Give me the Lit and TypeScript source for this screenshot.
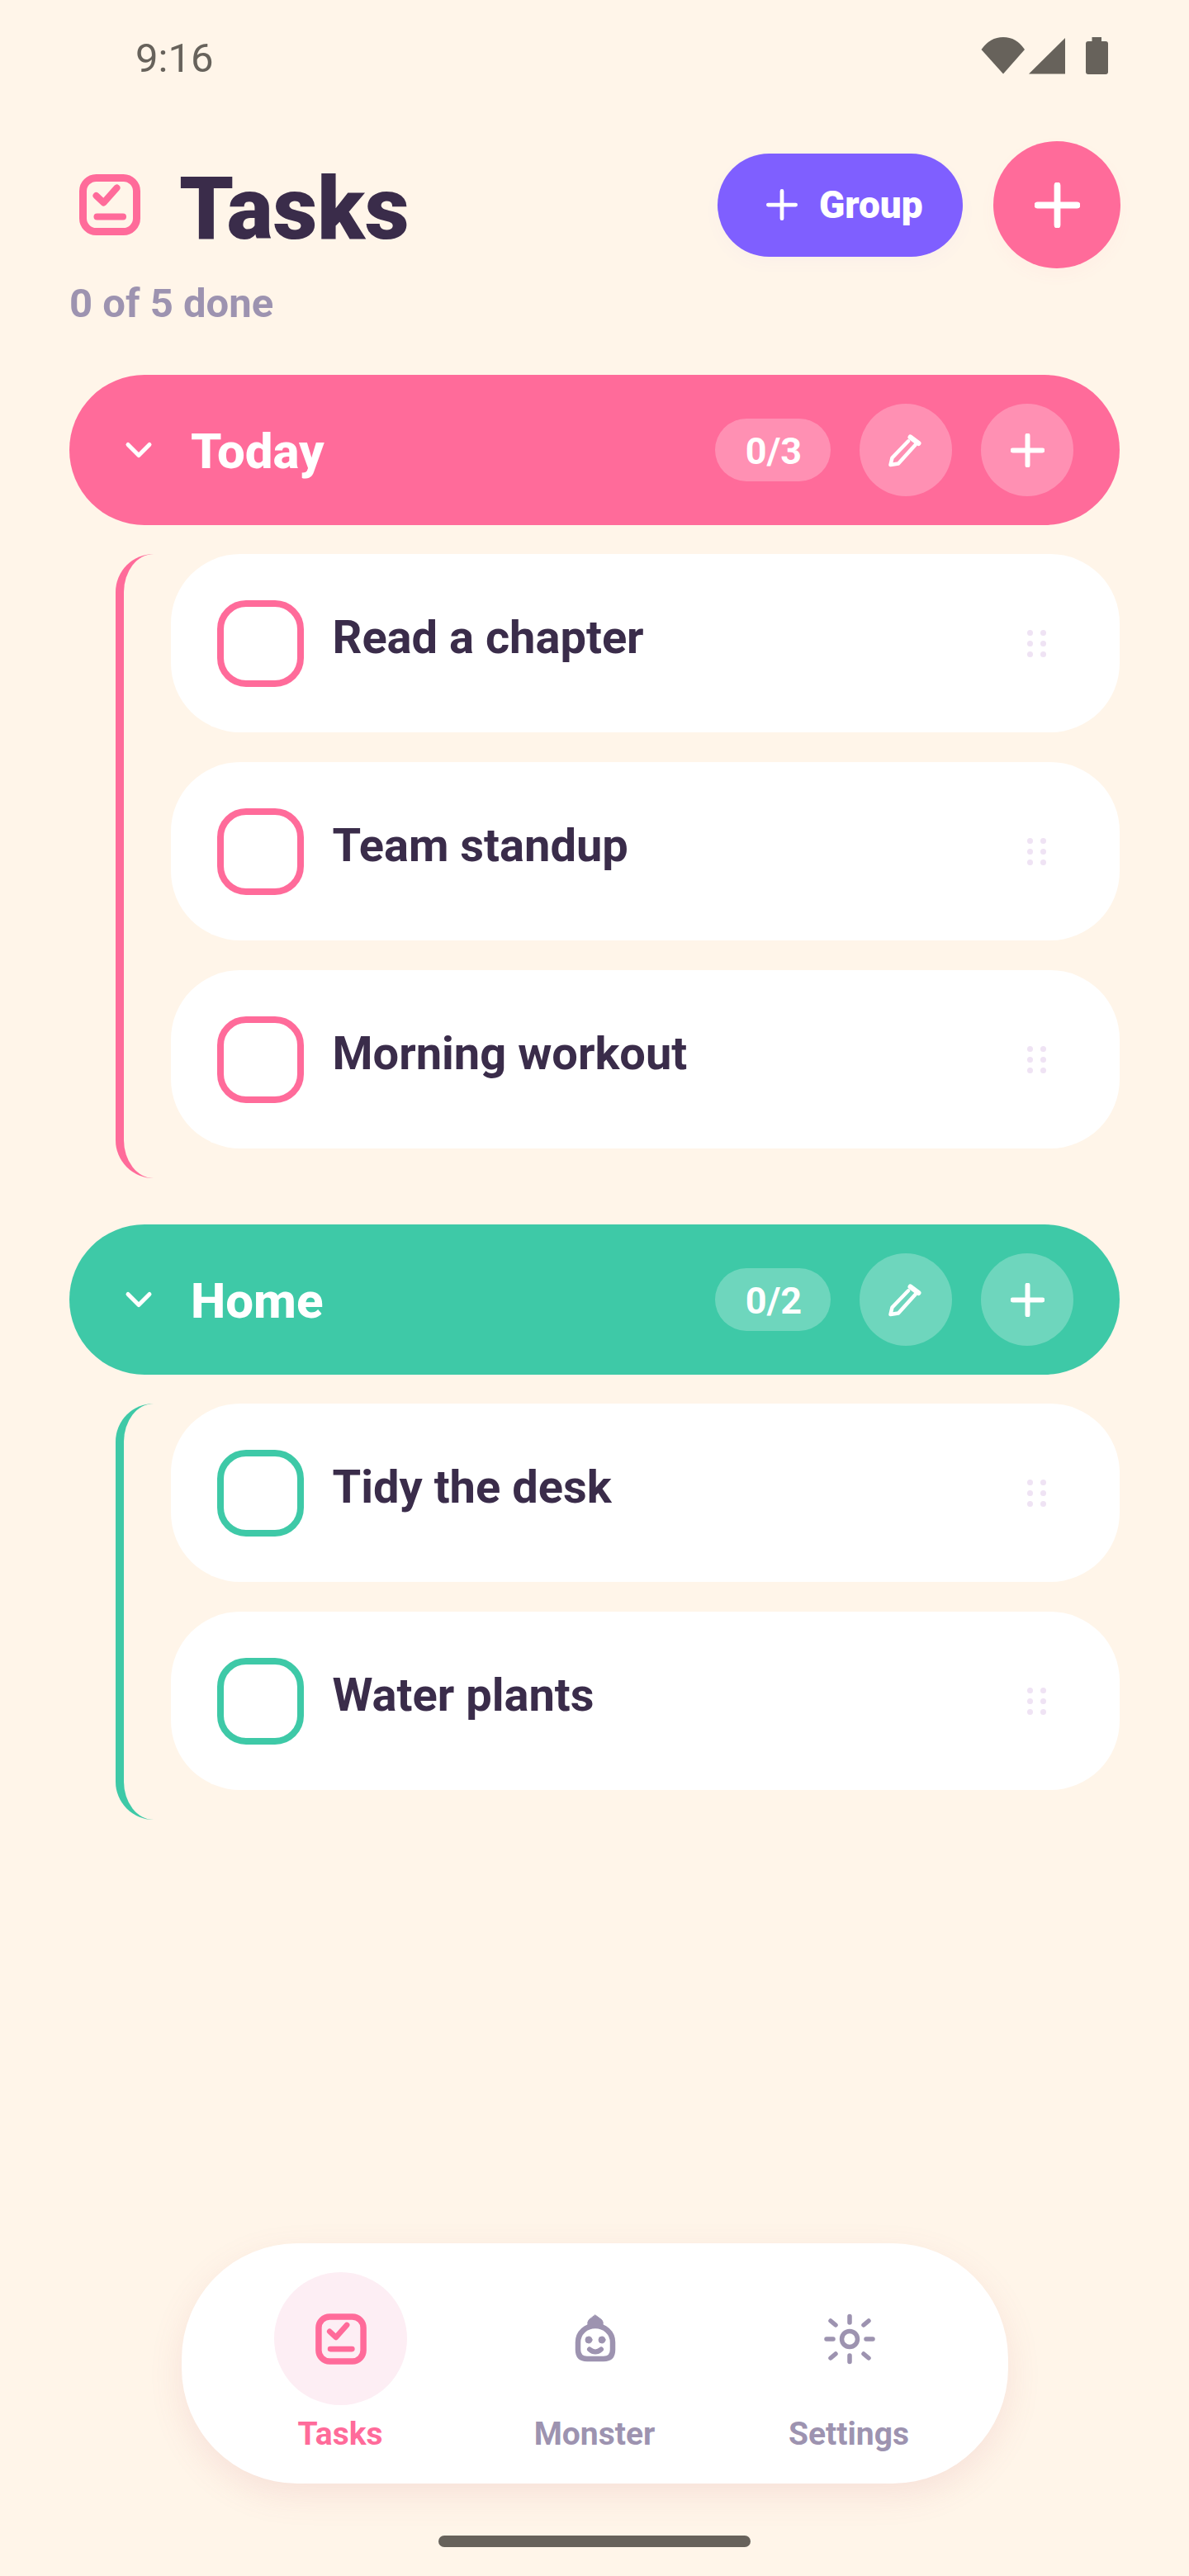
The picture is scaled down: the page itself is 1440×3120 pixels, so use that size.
import { LitElement, html, css, svg } from "lit";
import { customElement } from "lit/decorators.js";

const plus = (size: number, sw: number) => html`
  <svg width=${size} height=${size} viewBox="0 0 24 24" fill="none" stroke="#fff" stroke-width=${sw} stroke-linecap="round">
    <path d="M12 1.5v21M1.5 12h21" />
  </svg>
`;

const tasksIcon = (size: number, color: string) => html`
  <svg width=${size} height=${size} viewBox="0 0 84 84" fill="none" stroke=${color} stroke-linecap="round" stroke-linejoin="round">
    <rect x="9.500" y="9.500" width="65" height="65" rx="16" stroke-width="9" />
    <path d="M25.5 31l9 8.500 16-18" stroke-width="8" />
    <path d="M26.500 56.500h31.500" stroke-width="8" />
  </svg>
`;

const monsterIcon = html`
  <svg width="70" height="70" viewBox="0 0 70 70" fill="none" stroke="#9d93b0" stroke-linecap="round">
    <path d="M35 19C24 19 14 27 14 39v9q0 11 11 11h20q11 0 11-11v-9C56 27 46 19 35 19z" stroke-width="6.500" />
    <path d="M35 6l7.500 5.500q2.500 2.500 1.500 6.500H26q-1-4 1.500-6.500z" fill="#9d93b0" />
    <circle cx="27" cy="36" r="4" fill="#9d93b0" />
    <circle cx="43" cy="36" r="4" fill="#9d93b0" />
    <path d="M28 47.500q7 6 14 0" stroke-width="6" />
  </svg>
`;

const settingsIcon = html`
  <svg width="70" height="70" viewBox="0 0 70 70" fill="none" stroke="#9d93b0" stroke-linecap="round" stroke-width="5.500">
    <circle cx="35" cy="35" r="9.500" stroke-width="5.500" />
    <path d="M35 7.500V15M35 55v7.500M7 35h8M55 35h8M12 13l6 5M58 13l-6 5M12 58l6-5M58 58l-6-5" />
  </svg>
`;

const pencilIcon = html`
  <svg width="42" height="42" viewBox="0 0 42 42" fill="none" stroke="#fff" stroke-width="4.500" stroke-linecap="round" stroke-linejoin="round">
    <path d="M24 10.300L4.500 30.500 2.500 39l9.500-1.500L32.400 15" />
    <path d="M26.500 5.500l10 7.500" stroke-width="6" />
  </svg>
`;

const chevron = html`
  <svg class="chev" width="36" height="24" viewBox="0 0 36 24" fill="none" stroke="#fff" stroke-width="5" stroke-linecap="round" stroke-linejoin="round">
    <path d="M5 5.500l13 13 13-13" />
  </svg>
`;

const groups = [
  { name: "Today", color: "#ff6b9a", tasks: ["Read a chapter", "Team standup", "Morning workout"] },
  { name: "Home", color: "#3ec9a7", tasks: ["Tidy the desk", "Water plants"] },
];

const tabs = [
  { label: "Tasks", active: true },
  { label: "Monster", active: false },
  { label: "Settings", active: false },
];

@customElement("app-root")
export class AppRoot extends LitElement {
  static styles = css`
    :host {
      display: flex;
      flex-direction: column;
      width: 1440px;
      height: 3120px;
      background: #fff5e9;
      color: #3a2c4a;
      font-family: Roboto, "Noto Sans", sans-serif;
    }

    .status {
      display: flex;
      justify-content: space-between;
      align-items: flex-start;
      height: 171px;
      box-sizing: border-box;
      padding: 45px 98px 0 164px;
      flex: none;
    }

    .time {
      margin-top: 1px;
      font-size: 49px;
      line-height: 49px;
      color: #67625b;
    }

    .page {
      flex: 1;
      padding: 0 84px;
    }

    .top {
      display: flex;
      align-items: center;
      height: 154px;
    }

    .top-icon {
      display: flex;
      justify-content: center;
      width: 98px;
      margin-right: 35px;
    }

    .title {
      font-size: 105px;
      font-weight: 900;
      line-height: 154px;
      margin: 12px 0 0;
      flex: 1;
    }

    .btn-group {
      display: flex;
      align-items: center;
      gap: 26px;
      width: 297px;
      height: 125px;
      box-sizing: border-box;
      padding-left: 59px;
      border-radius: 63px;
      background: #7f5fff;
      color: #fff;
      font-size: 46px;
      font-weight: 900;
      box-shadow: 0 8px 20px rgba(127, 95, 255, 0.03);
    }

    .fab {
      display: flex;
      align-items: center;
      justify-content: center;
      width: 154px;
      height: 154px;
      margin: 0 -1px 0 37px;
      border-radius: 50%;
      background: #ff6b9a;
      box-shadow: 0 8px 20px rgba(255, 107, 154, 0.04);
    }

    .sub {
      height: 58px;
      margin: 14px 0 57px;
      font-size: 49px;
      font-weight: 700;
      line-height: 58px;
      color: #9d93b0;
    }

    .group + .group {
      margin-top: 56px;
    }

    .group-head {
      display: flex;
      align-items: center;
      height: 182px;
      box-sizing: border-box;
      padding: 0 56px 0 66px;
      border-radius: 91px;
      background: var(--accent);
      color: #fff;
    }

    .chev {
      flex: none;
    }

    .group-name {
      flex: 1;
      margin: 3px 0 0 45px;
      font-size: 60px;
      font-weight: 800;
    }

    .count {
      display: flex;
      align-items: center;
      justify-content: center;
      width: 140px;
      height: 76px;
      box-sizing: border-box;
      padding: 3px 0 0 2px;
      border-radius: 38px;
      background: rgba(255, 255, 255, 0.25);
      font-size: 45px;
      font-weight: 700;
    }

    .round {
      display: flex;
      align-items: center;
      justify-content: center;
      width: 112px;
      height: 112px;
      margin-left: 35px;
      border-radius: 50%;
      background: rgba(255, 255, 255, 0.25);
    }

    .list {
      display: flex;
      flex-direction: column;
      gap: 36px;
      margin: 35px 0 0 56px;
      padding: 0 0 36px 56.5px;
      border-left: 10.5px solid var(--accent);
      border-radius: 46px;
    }

    .card {
      display: flex;
      align-items: center;
      height: 216px;
      box-sizing: border-box;
      padding: 0 89px 0 56px;
      border-radius: 84px;
      background: #fff;
    }

    .check {
      width: 105px;
      height: 105px;
      box-sizing: border-box;
      border: 8.5px solid var(--accent);
      border-radius: 35px;
      flex: none;
    }

    .task {
      flex: 1;
      margin: 0 0 15px 35px;
      font-size: 56px;
      font-weight: 700;
    }

    .dots {
      display: grid;
      grid-template-columns: 7px 7px;
      gap: 6px 9.5px;
    }

    .dots span {
      width: 7px;
      height: 7px;
      border-radius: 50%;
      background: #efe3f4;
    }

    .nav {
      display: flex;
      justify-content: center;
      width: 1001px;
      height: 291px;
      box-sizing: border-box;
      margin: 0 auto;
      padding-top: 35px;
      border-radius: 140px;
      background: #fff;
      box-shadow: 0 14px 42px rgba(190, 90, 110, 0.12);
      flex: none;
    }

    .tab {
      display: flex;
      flex-direction: column;
      align-items: center;
      width: 308px;
      font-size: 39px;
      font-weight: 700;
      color: #9d93b0;
    }

    .tab.active {
      color: #ff6b9a;
    }

    .tab-icon {
      display: flex;
      align-items: center;
      justify-content: center;
      width: 161px;
      height: 161px;
      margin-bottom: 12px;
      border-radius: 50%;
    }

    .tab-icon svg {
      margin-left: 1.5px;
    }

    .tab.active .tab-icon {
      background: #fdeef4;
    }

    .home-bar {
      width: 378px;
      height: 14px;
      margin: 63px auto 35px;
      border-radius: 7px;
      background: #67625b;
      flex: none;
    }
  `;

  render() {
    return html`
      <div class="status">
        <span class="time">9:16</span>
        <svg width="155" height="45" viewBox="0 0 155 45" fill="#67625b">
          <path d="M28 44.500L1.500 15Q12 0 28 0T54 15z" />
          <path d="M59 44.500L103 1v43.500z" />
          ${svg`<rect x="128" y="5" width="27" height="40" rx="3" /><rect x="135.500" width="11.500" height="6" />`}
        </svg>
      </div>
      <div class="page">
        <div class="top">
          <div class="top-icon">${tasksIcon(84, "#ff6b9a")}</div>
          <h1 class="title">Tasks</h1>
          <div class="btn-group">${plus(38, 3)}Group</div>
          <div class="fab">${plus(55, 3.4)}</div>
        </div>
        <div class="sub">0 of 5 done</div>
        ${groups.map(
          (g) => html`
            <section class="group" style="--accent: ${g.color}">
              <div class="group-head">
                ${chevron}
                <span class="group-name">${g.name}</span>
                <span class="count">0/${g.tasks.length}</span>
                <span class="round">${pencilIcon}</span>
                <span class="round">${plus(41, 3.5)}</span>
              </div>
              <div class="list">
                ${g.tasks.map(
                  (t) => html`
                    <div class="card">
                      <span class="check"></span>
                      <span class="task">${t}</span>
                      <span class="dots">
                        ${[0, 1, 2, 3, 4, 5].map(() => html`<span></span>`)}
                      </span>
                    </div>
                  `
                )}
              </div>
            </section>
          `
        )}
      </div>
      <nav class="nav">
        ${tabs.map(
          (t, i) => html`
            <div class="tab ${t.active ? "active" : ""}">
              <span class="tab-icon">
                ${i === 0 ? tasksIcon(70, "#ff6b9a") : i === 1 ? monsterIcon : settingsIcon}
              </span>
              ${t.label}
            </div>
          `
        )}
      </nav>
      <div class="home-bar"></div>
    `;
  }
}

declare global {
  interface HTMLElementTagNameMap {
    "app-root": AppRoot;
  }
}
